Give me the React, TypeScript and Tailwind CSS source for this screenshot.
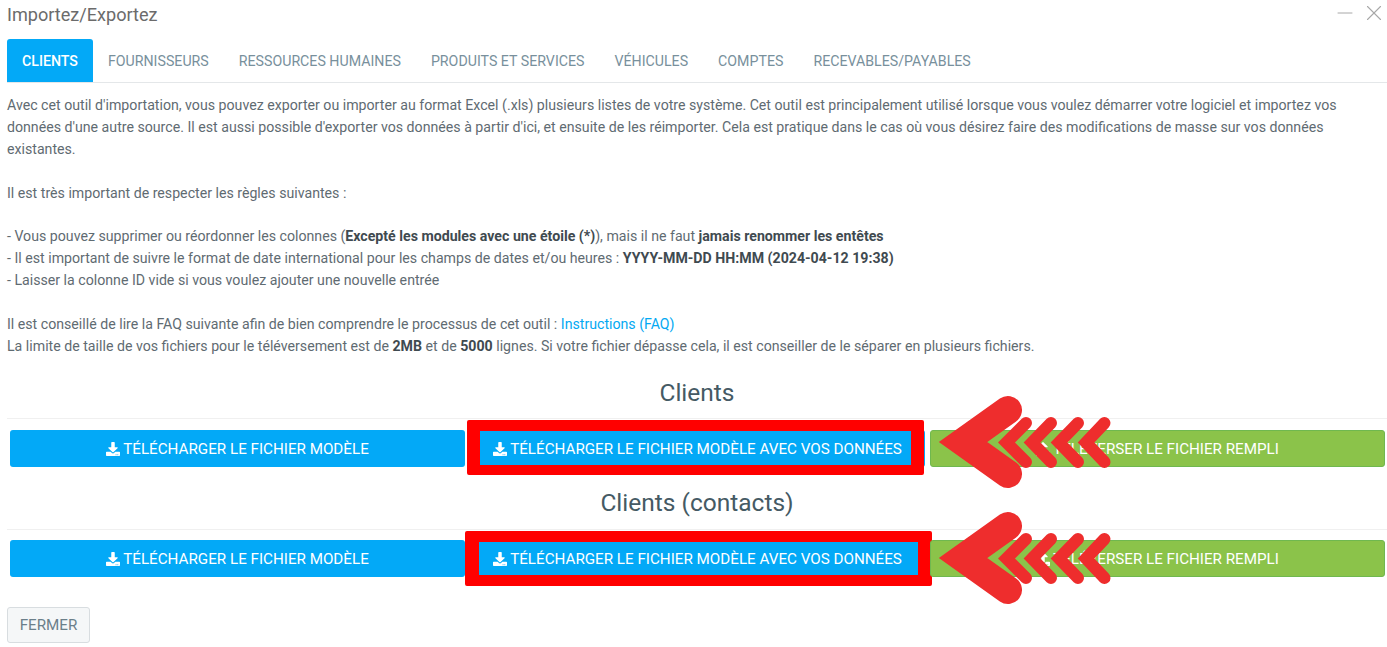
import React from "react";
import { FaDownload, FaUpload } from "react-icons/fa";
import { Minus, X } from "lucide-react";

const tabs = ["FOURNISSEURS", "RESSOURCES HUMAINES", "PRODUITS ET SERVICES", "VÉHICULES", "COMPTES", "RECEVABLES/PAYABLES"];

// red annotation arrow, tip sits on the left side of the svg
const Arrow = ({ className }: { className: string }) => (
  <svg className={className} width="180" height="100" viewBox="0 0 180 100" fill="none" stroke="#ee2d2d" strokeLinecap="round">
    <path d="M70 18 L25 50 L70 82" strokeWidth="28" strokeLinejoin="miter" />
    <path d="M88 31 L68.5 50.5 L88 70" strokeWidth="12" strokeLinejoin="miter" />
    <path d="M113 31 L94 50.5 L113 70" strokeWidth="12" strokeLinejoin="miter" />
    <path d="M140 31 L121 50.5 L140 70" strokeWidth="12" strokeLinejoin="miter" />
    <path d="M166.5 31 L148 50.5 L166.5 70" strokeWidth="12" strokeLinejoin="miter" />
  </svg>
);

const ImportRow = ({
  title,
  rowClass,
  headingClass,
  buttonsClass,
  redClass,
  arrowClass,
}: {
  title: string;
  rowClass: string;
  headingClass: string;
  buttonsClass: string;
  redClass: string;
  arrowClass: string;
}) => (
  <div className={rowClass}>
    <h2 className={`text-center text-[24.5px] font-normal leading-[29px] text-[#455a64] ${headingClass}`}>{title}</h2>
    <div className="h-px bg-[#f0f0f0]" />
    <div className={`pl-[3px] pr-[2px] grid grid-cols-3 gap-[5px] text-[15.2px] ${buttonsClass}`}>
      <button className="h-[37px] pt-px rounded-[3px] bg-[#03a9f7] text-white flex items-center justify-center gap-[3px]">
        <FaDownload size={14} /> TÉLÉCHARGER LE FICHIER MODÈLE
      </button>
      <div className="relative">
        <button className="w-full h-[37px] pt-px rounded-[3px] bg-[#03a9f7] text-white flex items-center justify-center gap-[3px]">
          <FaDownload size={14} /> TÉLÉCHARGER LE FICHIER MODÈLE AVEC VOS DONNÉES
        </button>
        <div className={`absolute rounded-[2px] border-solid border-[#ff0000] ${redClass}`} />
      </div>
      <div className="relative">
        <button className="w-full h-[37px] pt-px rounded-[3px] bg-[#8bc34a] border border-[#6fb84f] text-white flex items-center justify-center gap-[3px]">
          <FaUpload size={14} /> TÉLÉVERSER LE FICHIER REMPLI
        </button>
        <Arrow className={arrowClass} />
      </div>
    </div>
  </div>
);

export default function App() {
  return (
    <div className="relative w-[1387px] h-[647px] overflow-hidden bg-white pl-[7px] font-['Roboto',sans-serif] text-[14.16px] text-[#5f6b72]">
      <div className="flex items-start justify-between h-[39px]">
        <h4 className="text-[18.1px] leading-[29px] text-[#6b6b6b]">Importez/Exportez</h4>
        <div className="flex items-center gap-[4.5px] text-[#a8a8a8]">
          <Minus size={24} strokeWidth={1} />
          <X size={26} strokeWidth={1} />
        </div>
      </div>

      <div className="flex h-[44px] border-b border-[#e4e7e9] text-[14.2px]">
        <div className="h-[43px] px-[15px] pt-[2px] flex items-center rounded-t-[3px] bg-[#03a9f7] text-white font-medium">CLIENTS</div>
        {tabs.map((t) => (
          <div key={t} className="h-[43px] px-[15px] pt-[2px] flex items-center text-[#78909c]">
            {t}
          </div>
        ))}
      </div>

      <div className="mt-[12.4px] leading-[21.85px] pr-[10px]">
        <p>
          Avec cet outil d'importation, vous pouvez exporter ou importer au format Excel (.xls) plusieurs listes de votre système. Cet outil est principalement utilisé lorsque vous voulez démarrer votre logiciel et importez vos données d'une autre source. Il est aussi possible d'exporter vos données à partir d'ici, et ensuite de les réimporter. Cela est pratique dans le cas où vous désirez faire des modifications de masse sur vos données existantes.
        </p>
        <br />
        <p>Il est très important de respecter les règles suivantes :</p>
        <br />
        <p>
          - Vous pouvez supprimer ou réordonner les colonnes (<b className="text-[#3f4a50]">Excepté les modules avec une étoile (*)</b>), mais il ne faut <b className="text-[#3f4a50]">jamais renommer les entêtes</b>
        </p>
        <p>
          - Il est important de suivre le format de date international pour les champs de dates et/ou heures : <b className="text-[#3f4a50]">YYYY-MM-DD HH:MM (2024-04-12 19:38)</b>
        </p>
        <p>- Laisser la colonne ID vide si vous voulez ajouter une nouvelle entrée</p>
        <br />
        <p>
          Il est conseillé de lire la FAQ suivante afin de bien comprendre le processus de cet outil : <a className="text-[#03a9f3]">Instructions (FAQ)</a>
        </p>
        <p>
          La limite de taille de vos fichiers pour le téléversement est de <b className="text-[#3f4a50]">2MB</b> et de <b className="text-[#3f4a50]">5000</b> lignes. Si votre fichier dépasse cela, il est conseiller de le séparer en plusieurs fichiers.
        </p>
      </div>

      <ImportRow
        title="Clients"
        rowClass="mt-[20.6px]"
        headingClass="mb-[11px]"
        buttonsClass="mt-[11px]"
        redClass="-left-[3px] right-[1px] -top-[10px] -bottom-[8px] border-t-[11px] border-b-[10px] border-x-[13px]"
        arrowClass="absolute left-[8px] -top-[38px] pointer-events-none"
      />
      <ImportRow
        title="Clients (contacts)"
        rowClass="mt-[21px]"
        headingClass="mb-[12px]"
        buttonsClass="mt-[10px]"
        redClass="-left-[5px] -right-[7px] -top-[9px] -bottom-[9px] border-t-[11px] border-b-[11px] border-x-[14px]"
        arrowClass="absolute left-[8px] -top-[32px] pointer-events-none"
      />

      <button className="mt-[30px] w-[83px] h-[36px] pt-px rounded-[3px] border border-[#d8dde0] bg-[#f5f7f8] text-[15.2px] text-[#6b7f8a]">FERMER</button>
    </div>
  );
}
